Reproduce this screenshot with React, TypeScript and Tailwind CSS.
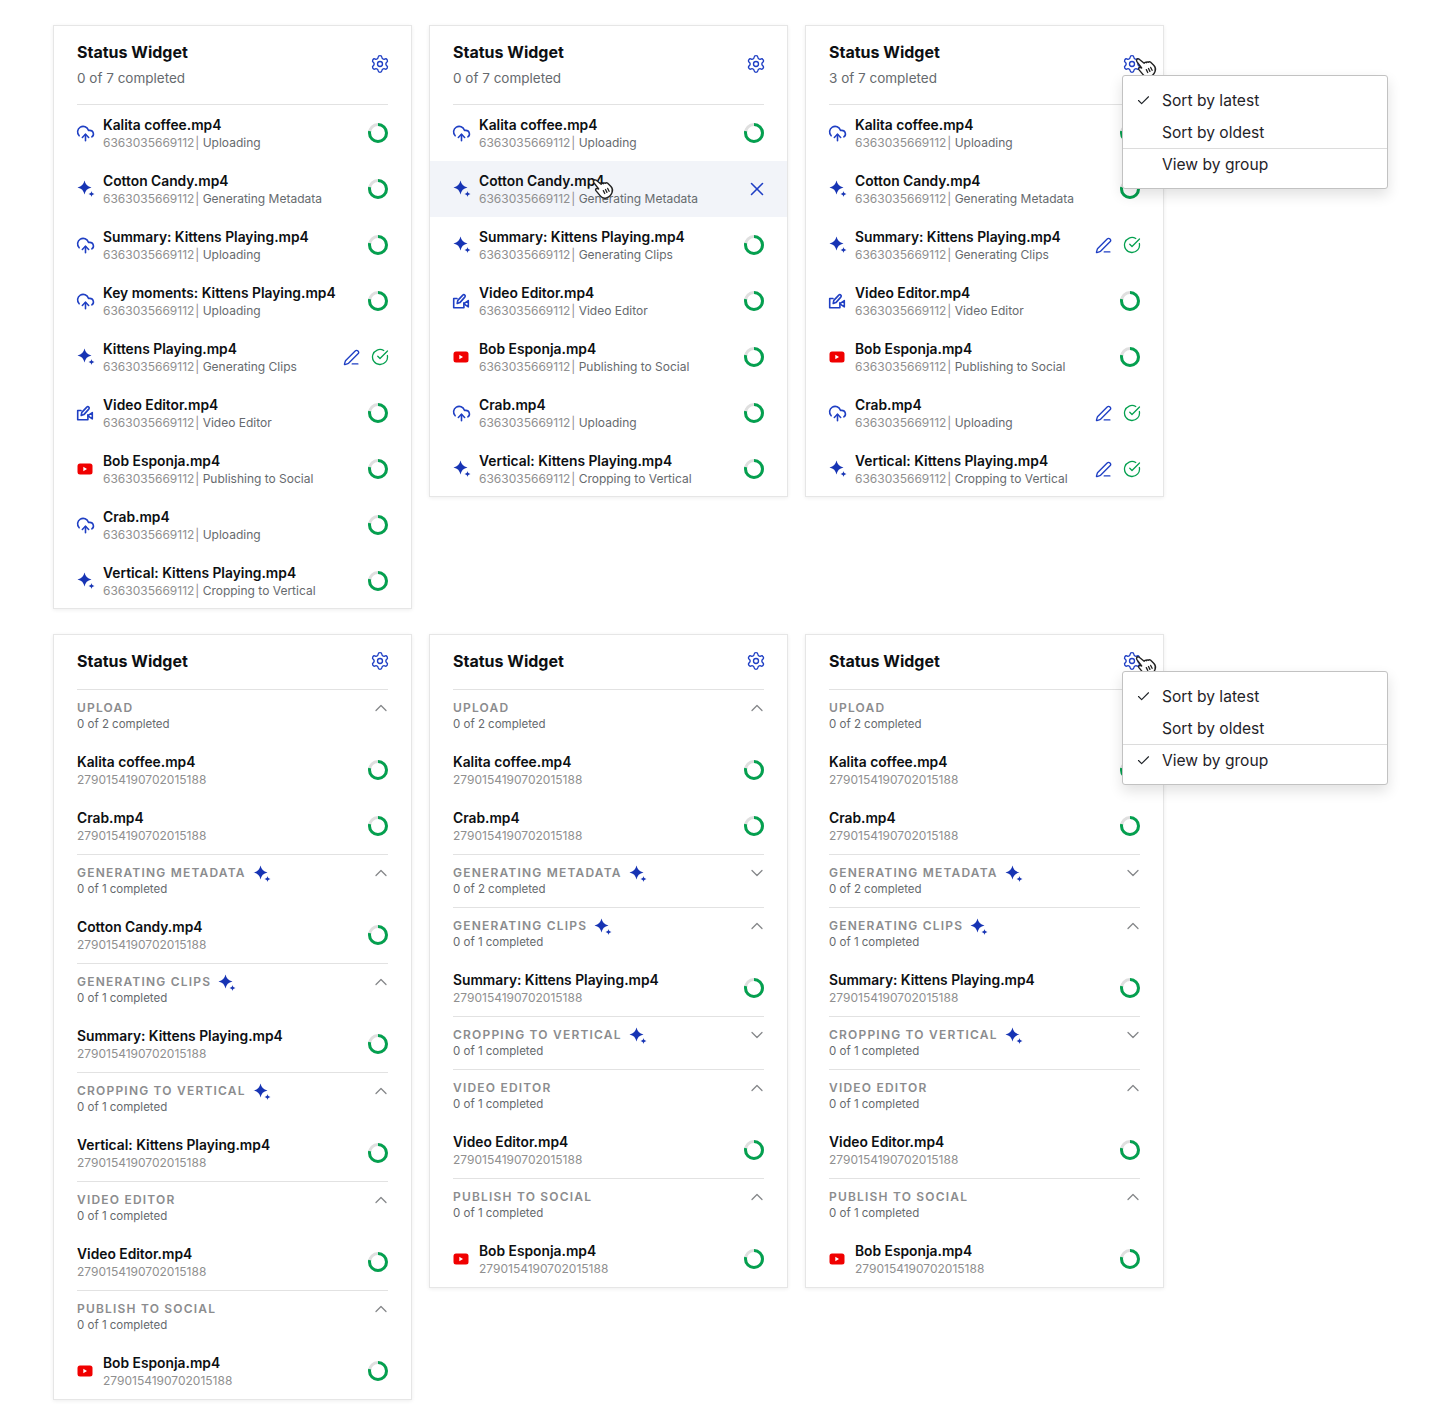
import { Check, ChevronDown, ChevronUp, CircleCheckBig, CloudUpload, PenLine, Settings, X } from "lucide-react";
import type { ReactNode } from "react";

type Kind = "upload" | "spark" | "video" | "youtube";

type Item = {
  name: string;
  status: string;
  kind: Kind;
  done?: boolean;
  hover?: boolean;
};

type Group = {
  label: string;
  done: string;
  spark?: boolean;
  open: boolean;
  items: { name: string; youtube?: boolean }[];
};

const LIST_ID = "6363035669112";
const GROUP_ID = "2790154190702015188";

const listOne: Item[] = [
  { name: "Kalita coffee.mp4", status: "Uploading", kind: "upload" },
  { name: "Cotton Candy.mp4", status: "Generating Metadata", kind: "spark" },
  { name: "Summary: Kittens Playing.mp4", status: "Uploading", kind: "upload" },
  { name: "Key moments: Kittens Playing.mp4", status: "Uploading", kind: "upload" },
  { name: "Kittens Playing.mp4", status: "Generating Clips", kind: "spark", done: true },
  { name: "Video Editor.mp4", status: "Video Editor", kind: "video" },
  { name: "Bob Esponja.mp4", status: "Publishing to Social", kind: "youtube" },
  { name: "Crab.mp4", status: "Uploading", kind: "upload" },
  { name: "Vertical: Kittens Playing.mp4", status: "Cropping to Vertical", kind: "spark" },
];

const listTwo: Item[] = [
  { name: "Kalita coffee.mp4", status: "Uploading", kind: "upload" },
  { name: "Cotton Candy.mp4", status: "Generating Metadata", kind: "spark", hover: true },
  { name: "Summary: Kittens Playing.mp4", status: "Generating Clips", kind: "spark" },
  { name: "Video Editor.mp4", status: "Video Editor", kind: "video" },
  { name: "Bob Esponja.mp4", status: "Publishing to Social", kind: "youtube" },
  { name: "Crab.mp4", status: "Uploading", kind: "upload" },
  { name: "Vertical: Kittens Playing.mp4", status: "Cropping to Vertical", kind: "spark" },
];

const listThree: Item[] = [
  { name: "Kalita coffee.mp4", status: "Uploading", kind: "upload" },
  { name: "Cotton Candy.mp4", status: "Generating Metadata", kind: "spark" },
  { name: "Summary: Kittens Playing.mp4", status: "Generating Clips", kind: "spark", done: true },
  { name: "Video Editor.mp4", status: "Video Editor", kind: "video" },
  { name: "Bob Esponja.mp4", status: "Publishing to Social", kind: "youtube" },
  { name: "Crab.mp4", status: "Uploading", kind: "upload", done: true },
  { name: "Vertical: Kittens Playing.mp4", status: "Cropping to Vertical", kind: "spark", done: true },
];

const groupsAllOpen: Group[] = [
  { label: "Upload", done: "0 of 2 completed", open: true, items: [{ name: "Kalita coffee.mp4" }, { name: "Crab.mp4" }] },
  { label: "Generating Metadata", done: "0 of 1 completed", spark: true, open: true, items: [{ name: "Cotton Candy.mp4" }] },
  { label: "Generating Clips", done: "0 of 1 completed", spark: true, open: true, items: [{ name: "Summary: Kittens Playing.mp4" }] },
  { label: "Cropping to Vertical", done: "0 of 1 completed", spark: true, open: true, items: [{ name: "Vertical: Kittens Playing.mp4" }] },
  { label: "Video Editor", done: "0 of 1 completed", open: true, items: [{ name: "Video Editor.mp4" }] },
  { label: "Publish to Social", done: "0 of 1 completed", open: true, items: [{ name: "Bob Esponja.mp4", youtube: true }] },
];

const groupsCollapsed: Group[] = [
  { label: "Upload", done: "0 of 2 completed", open: true, items: [{ name: "Kalita coffee.mp4" }, { name: "Crab.mp4" }] },
  { label: "Generating Metadata", done: "0 of 2 completed", spark: true, open: false, items: [] },
  { label: "Generating Clips", done: "0 of 1 completed", spark: true, open: true, items: [{ name: "Summary: Kittens Playing.mp4" }] },
  { label: "Cropping to Vertical", done: "0 of 1 completed", spark: true, open: false, items: [] },
  { label: "Video Editor", done: "0 of 1 completed", open: true, items: [{ name: "Video Editor.mp4" }] },
  { label: "Publish to Social", done: "0 of 1 completed", open: true, items: [{ name: "Bob Esponja.mp4", youtube: true }] },
];

function Sparkle({ className }: { className: string }) {
  return (
    <svg viewBox="0 0 18 18" className={className} fill="#1734b4">
      <path d="M7.5.5C8.300 4.400 10.400 6.600 14.500 7.500 10.400 8.400 8.300 10.600 7.500 14.500 6.700 10.600 4.600 8.400.5 7.500 4.600 6.600 6.700 4.400 7.5.5Z" />
      <path d="M14.500 11C14.900 12.900 15.500 13.500 17.500 14 15.500 14.500 14.900 15.100 14.500 17 14.100 15.100 13.500 14.500 11.500 14 13.500 13.500 14.100 12.900 14.500 11Z" />
    </svg>
  );
}

function VideoEdit() {
  return (
    <svg viewBox="0 0 18 18" className="-ml-px h-[18px] w-[18px]" fill="none" stroke="#1f3fc4" strokeWidth="1.6" strokeLinejoin="round" strokeLinecap="round">
      <path d="M5 6.500H1.700v9.300h10.200v-5" />
      <path d="M11.900 11.800l4.400 3V8.600l-4.400 3" />
      <path d="M5.200 11.400l.6-3 5-5.300a1.300 1.300 0 0 1 2 0 1.400 1.400 0 0 1 0 2L7.900 10.600z" />
    </svg>
  );
}

function Youtube() {
  return (
    <svg viewBox="0 0 16 12" className="h-3 w-4">
      <rect width="15" height="11" x="0.5" y="0.5" rx="2.5" fill="#f00000" />
      <path d="M6.300 3.800 10 6l-3.700 2.200z" fill="#fff" />
    </svg>
  );
}

function RowIcon({ kind }: { kind: Kind }) {
  if (kind === "upload") return <CloudUpload size={19} strokeWidth={2} className="-ml-[1px] shrink-0 text-[#1f3fc4]" />;
  if (kind === "spark") return <Sparkle className="-ml-[0.5px] h-[18px] w-[18px] shrink-0" />;
  if (kind === "video") return <VideoEdit />;
  return <Youtube />;
}

// green ring, grey wedge sits in the upper left
function Ring() {
  const c = 2 * Math.PI * 8.5;
  return (
    <svg viewBox="0 0 20 20" className="h-5 w-5 shrink-0">
      <circle cx="10" cy="10" r="8.500" fill="none" stroke="#dfdfdf" strokeWidth="3" />
      <circle
        cx="10"
        cy="10"
        r="8.500"
        fill="none"
        stroke="#04a04f"
        strokeWidth="3"
        strokeDasharray={`${c * 0.78} ${c}`}
        transform="rotate(-90 10 10)"
      />
    </svg>
  );
}

function Hand({ className }: { className: string }) {
  return (
    <svg viewBox="0 0 22 22" className={className} fill="#fff" stroke="#222" strokeWidth="1.300" strokeLinejoin="round" strokeLinecap="round">
      <path d="M2.500 3.200c.7-.9 1.900-.7 2.600 0l4.200 3.400c.2-.9 1.300-1 2-.5.3-.7 1.400-.8 2-.3.5-.5 1.400-.5 2 0l3 3c1.200 1.300 1.800 3.400 1 5.400-.9 2.400-2.700 4.300-5.200 5-2.300.6-4.200-.2-5.400-1.700l-4.200-5c-.7-1-.1-2.200 1.200-2l1.300.5L2.800 5.400c-.5-.7-.7-1.500-.3-2.200Z" />
      <path d="M11.300 12.500l1.300 2.600M13.300 11.500l1.300 2.600M15.300 10.500l1.300 2.600" strokeWidth="1.200" />
    </svg>
  );
}

function Menu({ grouped, className }: { grouped: boolean; className: string }) {
  const rows = [
    { label: "Sort by latest", on: true },
    { label: "Sort by oldest", on: false },
  ];
  return (
    <div className={`absolute left-[316px] z-20 w-[266px] rounded-[3px] border border-[#c2c2c2] bg-white pt-[8px] pb-[8px] text-[15.6px] text-[#1f2328] shadow-[0_6px_14px_rgba(0,0,0,0.12)] ${className}`}>
      {rows.map((r) => (
        <div key={r.label} className="flex h-8 items-center pl-[13px]">
          <span className="w-[26px]">{r.on && <Check size={15} strokeWidth={1.8} />}</span>
          <span className="pt-[2px]">{r.label}</span>
        </div>
      ))}
      <div className="border-t border-[#dcdcdc]" />
      <div className="flex h-[31px] items-center pl-[13px]">
        <span className="w-[26px]">{grouped && <Check size={15} strokeWidth={1.8} />}</span>
        View by group
      </div>
    </div>
  );
}

function ItemText({ name, sub }: { name: string; sub: ReactNode }) {
  return (
    <div className="min-w-0 flex-1 pt-[2px]">
      <div className="truncate text-[13.8px] leading-[18px] font-semibold text-[#0d0f12]">{name}</div>
      <div className="truncate text-[12px] leading-[18px]">{sub}</div>
    </div>
  );
}

function ListRow({ item }: { item: Item }) {
  return (
    <div className={`flex h-14 items-center px-[23px] ${item.hover ? "relative bg-[#f2f4f9]" : ""}`}>
      <div className="flex w-[26px] shrink-0 items-center">
        <RowIcon kind={item.kind} />
      </div>
      <ItemText
        name={item.name}
        sub={
          <>
            <span className="text-[#8f8f8f] [word-spacing:-2.5px]">{LIST_ID} |</span>{" "}
            <span className="text-[#666a6e]">{item.status}</span>
          </>
        }
      />
      {item.hover ? (
        <X size={22} strokeWidth={1.7} className="-mr-[3.5px] shrink-0 text-[#1f3fc4]" />
      ) : item.done ? (
        <div className="-mr-[1px] flex shrink-0 items-center gap-[11px]">
          <PenLine size={17} strokeWidth={1.9} className="text-[#1f3fc4]" />
          <CircleCheckBig size={18} strokeWidth={1.7} className="text-[#04a04f]" />
        </div>
      ) : (
        <Ring />
      )}
      {item.hover && <Hand className="absolute top-[16px] left-[161px] h-[24px] w-[24px]" />}
    </div>
  );
}

function GroupBlock({ group }: { group: Group }) {
  return (
    <div>
      <div className="mx-[23px] border-t border-[#e2e2e2]" />
      <div className="flex h-[52px] items-start justify-between px-[23px] pt-[10px]">
        <div>
          <div className="flex items-center text-[12px] leading-4 font-semibold tracking-[0.1em] text-[#8b8c8e] uppercase">
            {group.label}
            {group.spark && <Sparkle className="-mb-[2px] ml-[7px] h-[18px] w-[18px]" />}
          </div>
          <div className="text-[11.5px] leading-4 text-[#666a6e]">{group.done}</div>
        </div>
        {group.open ? (
          <ChevronUp size={20} strokeWidth={1.5} className="-mt-[2px] -mr-[2.5px] text-[#85878a]" />
        ) : (
          <ChevronDown size={20} strokeWidth={1.5} className="-mt-[2px] -mr-[2.5px] text-[#85878a]" />
        )}
      </div>
      {group.items.map((it) => (
        <div key={it.name} className="flex h-14 items-center px-[23px]">
          {it.youtube && (
            <div className="w-[26px] shrink-0">
              <Youtube />
            </div>
          )}
          <ItemText name={it.name} sub={<span className="text-[#8f8f8f]">{GROUP_ID}</span>} />
          <Ring />
        </div>
      ))}
    </div>
  );
}

function Card({ subtitle, children, overlay }: { subtitle?: string; children: ReactNode; overlay?: ReactNode }) {
  return (
    <div className="relative w-[359px] shrink-0 border border-[#e6e6e6] bg-white shadow-[0_1px_4px_rgba(0,0,0,0.07)]">
      <div className="flex items-center justify-between px-[23px] pt-[14px] pb-4">
        <div>
          <div className="text-[16px] leading-6 font-bold text-[#0d0f12]">Status Widget</div>
          {subtitle && <div className="mt-1 text-[13.5px] leading-5 text-[#666a6e]">{subtitle}</div>}
        </div>
        <Settings size={20} strokeWidth={1.6} className="-mr-[2px] text-[#1f3fc4]" />
      </div>
      {subtitle && <div className="mx-[23px] border-t border-[#e2e2e2]" />}
      <div className={subtitle ? "-mb-px" : ""}>{children}</div>
      {overlay}
    </div>
  );
}

function GearHand({ top }: { top: string }) {
  return <Hand className={`absolute left-[328px] h-[24px] w-[24px] ${top}`} />;
}

export default function App() {
  return (
    <div className="h-[1424px] w-[1440px] bg-white pt-[25px] pl-[53px] font-['Inter',sans-serif]">
      <div className="flex items-start gap-[17px]">
        <Card subtitle="0 of 7 completed">
          {listOne.map((i) => <ListRow key={i.name} item={i} />)}
        </Card>
        <Card subtitle="0 of 7 completed">
          {listTwo.map((i) => <ListRow key={i.name} item={i} />)}
        </Card>
        <Card
          subtitle="3 of 7 completed"
          overlay={
            <>
              <GearHand top="top-[30px]" />
              <Menu grouped={false} className="top-[49px]" />
            </>
          }
        >
          {listThree.map((i) => <ListRow key={i.name} item={i} />)}
        </Card>
      </div>
      <div className="mt-[25px] flex items-start gap-[17px]">
        <Card>
          {groupsAllOpen.map((g) => <GroupBlock key={g.label} group={g} />)}
        </Card>
        <Card>
          {groupsCollapsed.map((g) => <GroupBlock key={g.label} group={g} />)}
        </Card>
        <Card
          overlay={
            <>
              <GearHand top="top-[19px]" />
              <Menu grouped className="top-[36px]" />
            </>
          }
        >
          {groupsCollapsed.map((g) => <GroupBlock key={g.label} group={g} />)}
        </Card>
      </div>
    </div>
  );
}
